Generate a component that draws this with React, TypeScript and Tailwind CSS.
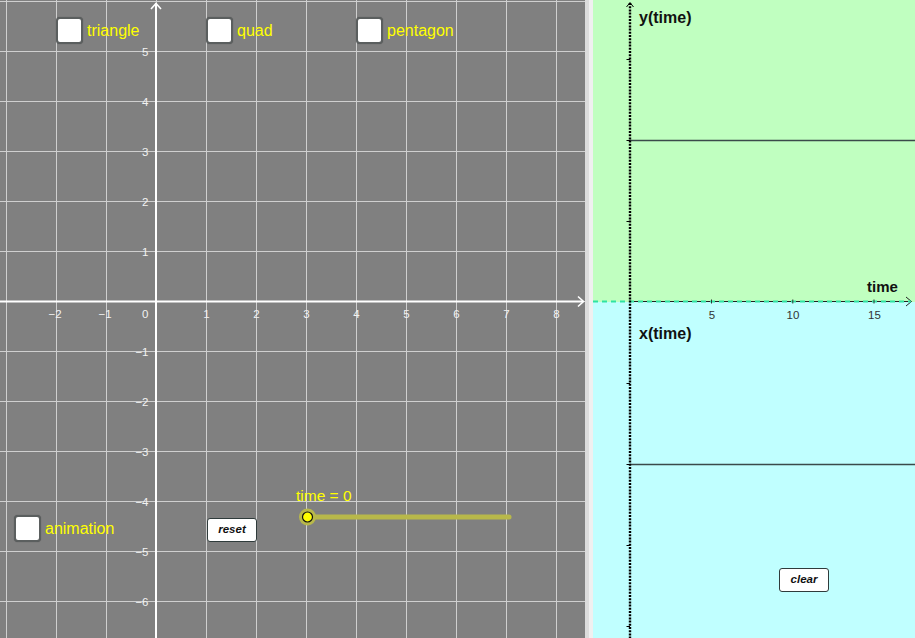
import React from "react";

const Checkbox = ({ x, y, label }: { x: number; y: number; label: string }) => (
  <div className="absolute flex items-center" style={{ left: x, top: y }}>
    <div className="w-[27px] h-[27px] rounded-[4px] bg-white border-2 border-[#5b5f5f] shadow-[0_0_1px_rgba(0,0,0,0.4)]" />
    <span className="ml-[4px] text-[16px] leading-none text-[#ffff00]">{label}</span>
  </div>
);

const Btn = ({ x, y, label }: { x: number; y: number; label: string }) => (
  <div
    className="absolute w-[50px] h-[24px] flex items-center justify-center bg-white border border-[#2f3b3b] rounded-[3px] text-[11.5px] italic font-bold text-[#111]"
    style={{ left: x, top: y }}
  >
    {label}
  </div>
);

export default function App() {
  const vx = Array.from({ length: 12 }, (_, i) => 6.5 + 50 * i);
  const hy = Array.from({ length: 13 }, (_, i) => 1.5 + 50 * i);
  const xLabels = [-2, -1, 1, 2, 3, 4, 5, 6, 7, 8];
  const yLabels = [5, 4, 3, 2, 1, -1, -2, -3, -4, -5, -6];
  const fmt = (n: number) => (n < 0 ? "\u2212" + Math.abs(n) : String(n));

  return (
    <div className="flex w-[915px] h-[638px] overflow-hidden font-['Liberation_Sans',Arial,sans-serif]">
      {/* Left graphics view */}
      <div className="relative w-[585px] h-full bg-[#808080] shrink-0">
        <svg className="absolute inset-0" width="585" height="638">
          {vx.map((x) => (
            <line key={"v" + x} x1={x} y1={0} x2={x} y2={638} stroke="#cfcfcf" strokeWidth={1} />
          ))}
          {hy.map((y) => (
            <line key={"h" + y} x1={0} y1={y} x2={585} y2={y} stroke="#cfcfcf" strokeWidth={1} />
          ))}
          {/* axes */}
          <line x1={156} y1={3} x2={156} y2={638} stroke="#ffffff" strokeWidth={2} />
          <line x1={0} y1={301.5} x2={583} y2={301.5} stroke="#ffffff" strokeWidth={2} />
          <polyline points="151,9 156,3.5 161,9" fill="none" stroke="#ffffff" strokeWidth={1.6} />
          <polyline points="578,296.5 583.5,301.5 578,306.5" fill="none" stroke="#ffffff" strokeWidth={1.6} />
          {/* x labels */}
          {xLabels.map((n) => (
            <text
              key={"xl" + n}
              x={156 + 50 * n + (n < 0 ? -1 : 0.5)}
              y={318}
              fontSize={11.5}
              fill="#f2f2f2"
              textAnchor="middle"
              fontFamily="Liberation Sans, Arial, sans-serif"
            >
              {fmt(n)}
            </text>
          ))}
          <text x={148.5} y={318} fontSize={11.5} fill="#f2f2f2" textAnchor="end" fontFamily="Liberation Sans, Arial, sans-serif">
            0
          </text>
          {/* y labels */}
          {yLabels.map((n) => (
            <text
              key={"yl" + n}
              x={148.5}
              y={301.5 - 50 * n + 4}
              fontSize={11.5}
              fill="#f2f2f2"
              textAnchor="end"
              fontFamily="Liberation Sans, Arial, sans-serif"
            >
              {fmt(n)}
            </text>
          ))}
          {/* slider */}
          <line x1={307} y1={517} x2={509} y2={517} stroke="#b8b84a" strokeWidth={5} strokeLinecap="round" />
          <circle cx={307.5} cy={517} r={8.5} fill="#b8b84a" />
          <circle cx={307.5} cy={517} r={5} fill="#ffff00" stroke="#111" strokeWidth={1.2} />
          <text x={296} y={501} fontSize={15.5} fill="#ffff00" fontFamily="Liberation Sans, Arial, sans-serif">
            time = 0
          </text>
        </svg>

        <Checkbox x={56} y={17} label="triangle" />
        <Checkbox x={206} y={17} label="quad" />
        <Checkbox x={356} y={17} label="pentagon" />
        <Checkbox x={14} y={515} label="animation" />
        <Btn x={207} y={518} label="reset" />
      </div>

      {/* divider */}
      <div className="flex h-full shrink-0">
        <div className="w-[4px] bg-[#dcdcdc]" />
        <div className="w-[4px] bg-[#f0f0f0]" />
      </div>

      {/* Right graphics views */}
      <div className="relative flex-1 flex flex-col">
        <div className="h-[302px] bg-[#c0ffc0]" />
        <div className="flex-1 bg-[#c0ffff]" />
        <svg className="absolute inset-0" width="322" height="638">
          <line x1={37} y1={140.5} x2={322} y2={140.5} stroke="#3a4a4a" strokeWidth={1.3} />
          <line x1={37} y1={464.5} x2={322} y2={464.5} stroke="#3a4a4a" strokeWidth={1.3} />
          {/* time axis */}
          <line x1={37} y1={301.5} x2={318} y2={301.5} stroke="#222" strokeWidth={1} />
          <polyline points="313,297 318.5,301.5 313,306" fill="none" stroke="#222" strokeWidth={1} />
          <line x1={0} y1={301.5} x2={318} y2={301.5} stroke="#2fe3a2" strokeWidth={2} strokeDasharray="5 4" />
          {/* y axis dotted */}
          <line x1={37} y1={3} x2={37} y2={638} stroke="#000" strokeWidth={2.4} strokeDasharray="2 1.2" />
          <polyline points="33.5,7 37,2.5 40.5,7" fill="none" stroke="#000" strokeWidth={1} />
          {[59, 140, 221, 383, 464, 545, 626].map((y) => (
            <line key={"t" + y} x1={33.5} y1={y + 0.5} x2={37} y2={y + 0.5} stroke="#000" strokeWidth={1} />
          ))}
          {[118.5, 199.8, 281].map((x) => (
            <line key={"xt" + x} x1={x} y1={299.5} x2={x} y2={303.5} stroke="#333" strokeWidth={1} />
          ))}
          {[
            [119, "5"],
            [200, "10"],
            [281.5, "15"],
          ].map(([x, t]) => (
            <text
              key={String(t)}
              x={Number(x)}
              y={319}
              fontSize={11.5}
              fill="#333"
              textAnchor="middle"
              fontFamily="Liberation Sans, Arial, sans-serif"
            >
              {t}
            </text>
          ))}
          <text x={46} y={23} fontSize={16} fontWeight="bold" fill="#111" fontFamily="Liberation Sans, Arial, sans-serif">
            y(time)
          </text>
          <text x={274} y={292} fontSize={15} fontWeight="bold" fill="#111" fontFamily="Liberation Sans, Arial, sans-serif">
            time
          </text>
          <text x={46} y={339} fontSize={16} fontWeight="bold" fill="#111" fontFamily="Liberation Sans, Arial, sans-serif">
            x(time)
          </text>
        </svg>
        <Btn x={186} y={568} label="clear" />
      </div>
    </div>
  );
}
